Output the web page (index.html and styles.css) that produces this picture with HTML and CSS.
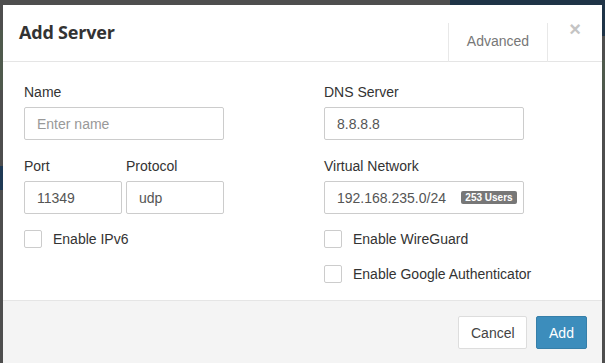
FILE: index.html
```html
<!DOCTYPE html>
<html>
<head>
<meta charset="utf-8">
<link rel="stylesheet" href="styles.css">
</head>
<body>
<div class="backdrop">
  <div class="bg-bar bg-top"></div>
  <div class="bg-bar bg-right-blue"></div>
  <div class="bg-bar bg-left-green"></div>
  <div class="bg-bar bg-left-blue"></div>
  <div class="bg-bar bg-right-green"></div>
</div>
<div class="modal">
  <div class="modal-header">
    <h4 class="title">Add Server</h4>
    <div class="tab">Advanced</div>
    <span class="close">&times;</span>
  </div>
  <div class="modal-body">
    <div class="col">
      <div class="group">
        <label class="lbl">Name</label>
        <div class="input placeholder w200">Enter name</div>
      </div>
      <div class="group row2">
        <div>
          <label class="lbl">Port</label>
          <div class="input w98">11349</div>
        </div>
        <div>
          <label class="lbl">Protocol</label>
          <div class="input w98">udp</div>
        </div>
      </div>
      <div class="check"><span class="box"></span><span>Enable IPv6</span></div>
    </div>
    <div class="col">
      <div class="group">
        <label class="lbl">DNS Server</label>
        <div class="input w200">8.8.8.8</div>
      </div>
      <div class="group">
        <label class="lbl">Virtual Network</label>
        <div class="input w200 net"><span>192.168.235.0/24</span><span class="badge">253 Users</span></div>
      </div>
      <div class="check"><span class="box"></span><span>Enable WireGuard</span></div>
      <div class="check"><span class="box"></span><span>Enable Google Authenticator</span></div>
    </div>
  </div>
  <div class="modal-footer">
    <button class="btn btn-default">Cancel</button>
    <button class="btn btn-primary">Add</button>
  </div>
</div>
</body>
</html>
```
FILE: styles.css
```css
* { box-sizing: border-box; }
html, body { margin: 0; padding: 0; }
body {
  width: 605px;
  height: 363px;
  overflow: hidden;
  background: #4e4e4e;
  font-family: "Liberation Sans", Arial, sans-serif;
  font-size: 14px;
  color: #333;
  position: relative;
}
.backdrop { position: absolute; inset: 0; }
.bg-bar { position: absolute; }
.bg-top { left: 450px; top: 0; width: 155px; height: 5px; background: #1f3447; }
.bg-right-blue { right: 0; top: 0; width: 3px; height: 36px; background: #1f3447; }
.bg-right-green { right: 0; top: 60px; width: 3px; height: 30px; background: #4f5a4d; }
.bg-left-green { left: 0; top: 30px; width: 3px; height: 60px; background: #4f5a4d; }
.bg-left-blue { left: 0; top: 166px; width: 3px; height: 24px; background: #1f3a55; }
.modal {
  position: relative;
  margin: 5px 0 0 3px;
  width: 599px;
  height: 358px;
  background: #fff;
  display: flex;
  flex-direction: column;
}
.modal-header {
  height: 57px;
  border-bottom: 1px solid #e5e5e5;
  display: flex;
  align-items: stretch;
  padding-left: 16px;
}
.title {
  margin: 0;
  font-family: "Open Sans", sans-serif;
  font-weight: 700;
  font-size: 18px;
  letter-spacing: -0.2px;
  color: #333;
  flex: 1;
  align-self: center;
  margin-top: -2px;
}
.tab {
  align-self: flex-end;
  width: 100px;
  height: 39px;
  border-left: 1px solid #e8e8e8;
  border-right: 1px solid #e8e8e8;
  color: #777;
  font-size: 14px;
  display: flex;
  align-items: center;
  justify-content: center;
  padding-bottom: 3px;
  margin-bottom: -1px;
}
.close {
  width: 54px;
  text-align: center;
  color: #c4c4c4;
  font-weight: 700;
  font-size: 20px;
  padding-top: 14px;
  line-height: 1;
}
.modal-body {
  flex: 1;
  display: grid;
  grid-template-columns: 300px 278px;
  padding: 20px 0 0 21px;
}
.group { margin-bottom: 16px; }
.row2 { display: flex; gap: 4px; }
.lbl {
  display: block;
  line-height: 20px;
  margin-bottom: 5px;
  color: #333;
}
.input {
  height: 33px;
  border: 1px solid #ccc;
  border-radius: 2px;
  padding: 0 12px;
  display: flex;
  align-items: center;
  color: #555;
  font-size: 14px;
}
.placeholder { color: #999; }
.w200 { width: 200px; }
.w98 { width: 98px; }
.net { justify-content: space-between; padding-right: 6px; }
.badge {
  background: #777;
  color: #fff;
  font-weight: 700;
  font-size: 10px;
  line-height: 13px;
  height: 13px;
  padding: 0 3px;
  border-radius: 2px;
  width: 56px;
  text-align: center;
}
.check {
  display: flex;
  align-items: center;
  gap: 11px;
  height: 18px;
  margin-bottom: 17px;
  color: #333;
}
.box {
  width: 18px;
  height: 18px;
  border: 1px solid #ccc;
  border-radius: 2px;
  background: #fff;
}
.modal-footer {
  height: 63px;
  border-top: 1px solid #e5e5e5;
  background: #f4f4f4;
  display: flex;
  justify-content: flex-end;
  align-items: flex-start;
  gap: 9px;
  padding: 15px 15px 0 0;
}
.btn {
  height: 33px;
  font-family: "Liberation Sans", Arial, sans-serif;
  font-size: 14px;
  border-radius: 2px;
  padding: 0 12px;
}
.btn-default { width: 69px; background: #fff; border: 1px solid #ddd; color: #444; }
.btn-primary { width: 51px; background: #3c8dbc; border: 1px solid #367fa9; color: #fff; }
```
